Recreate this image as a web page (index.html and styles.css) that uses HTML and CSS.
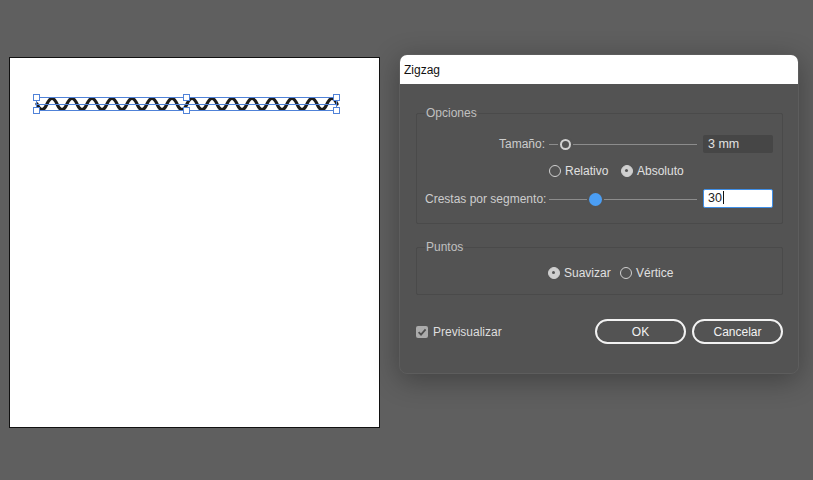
FILE: index.html
```html
<!DOCTYPE html>
<html lang="es">
<head>
<meta charset="utf-8">
<title>Zigzag</title>
<link rel="stylesheet" href="styles.css">
</head>
<body>
<div class="workspace">
  <div class="artboard">
    <svg class="art" viewBox="10 58 369 369" width="369" height="369">
      <path class="wave" d="M37,104 q5,11 10,0 t10,0 t10,0 t10,0 t10,0 t10,0 t10,0 t10,0 t10,0 t10,0 t10,0 t10,0 t10,0 t10,0 t10,0 t10,0 t10,0 t10,0 t10,0 t10,0 t10,0 t10,0 t10,0 t10,0 t10,0 t10,0 t10,0 t10,0 t10,0 t10,0"/>
      <rect class="sel" x="36.5" y="97.5" width="300" height="13"/>
      <line class="sel" x1="37" y1="104.5" x2="337" y2="104.5"/>
      <rect class="handle" x="33.5" y="94.5" width="6" height="6"/>
      <rect class="handle" x="183.5" y="94.5" width="6" height="6"/>
      <rect class="handle" x="333.5" y="94.5" width="6" height="6"/>
      <rect class="handle" x="33.5" y="107.5" width="6" height="6"/>
      <rect class="handle" x="183.5" y="107.5" width="6" height="6"/>
      <rect class="handle" x="333.5" y="107.5" width="6" height="6"/>
    </svg>
  </div>

  <div class="dialog">
    <div class="titlebar">Zigzag</div>
    <div class="body">
      <fieldset class="group">
        <legend>Opciones</legend>
        <div class="grid">
          <span class="label">Tamaño:</span>
          <div class="slider"><span class="track"></span><span class="thumb hollow"></span></div>
          <div class="input dark">3 mm</div>

          <span class="label"></span>
          <div class="radios">
            <span class="radio"><span class="dot"></span>Relativo</span>
            <span class="radio"><span class="dot on"></span>Absoluto</span>
          </div>
          <span></span>

          <span class="label">Crestas por segmento:</span>
          <div class="slider"><span class="track"></span><span class="thumb blue"></span></div>
          <div class="input light">30<span class="caret"></span></div>
        </div>
      </fieldset>

      <fieldset class="group puntos">
        <legend>Puntos</legend>
        <div class="radios pts">
          <span class="radio"><span class="dot on"></span>Suavizar</span>
          <span class="radio"><span class="dot"></span>Vértice</span>
        </div>
      </fieldset>

      <div class="footer">
        <label class="check">
          <span class="box"><svg viewBox="0 0 12 12" width="12" height="12"><path d="M2.6,6.2 L5,8.6 L9.6,3.4" fill="none" stroke="#4e4e4e" stroke-width="1.8"/></svg></span>
          Previsualizar
        </label>
        <div class="buttons">
          <button class="btn">OK</button>
          <button class="btn">Cancelar</button>
        </div>
      </div>
    </div>
  </div>
</div>
</body>
</html>
```

FILE: styles.css
```css
html, body {
  margin: 0;
  padding: 0;
  background: #5f5f5f;
  width: 813px;
  height: 480px;
  overflow: hidden;
  font-family: "Liberation Sans", Arial, sans-serif;
  font-size: 12px;
}

.workspace {
  display: flex;
  align-items: flex-start;
  padding: 54px 0 0 9px;
  gap: 19px;
}

.artboard {
  margin-top: 3px;
  width: 369px;
  height: 369px;
  background: #ffffff;
  border: 1px solid #111;
  flex: none;
}

.art { display: block; }

.wave {
  fill: none;
  stroke: #1c1c1c;
  stroke-width: 3.2;
  stroke-linecap: round;
}

.sel {
  fill: none;
  stroke: #5082d8;
  stroke-width: 1;
}

.handle {
  fill: #ffffff;
  stroke: #5082d8;
  stroke-width: 1;
}

.dialog {
  width: 398px;
  height: 318px;
  flex: none;
  background: #535353;
  border: 1px solid #5d5d5d;
  border-radius: 8px;
  box-shadow: 0 6px 28px rgba(0, 0, 0, 0.32);
  overflow: hidden;
}

.titlebar {
  height: 29px;
  background: #ffffff;
  color: #111;
  line-height: 30px;
  padding-left: 4px;
  font-size: 12px;
}

.body {
  padding: 22px 15px 0 16px;
  color: #d6d6d6;
}

.group {
  margin: 0;
  padding: 14px 8px 15px 8px;
  border: 1px solid #4a4a4a;
  border-radius: 2px;
  min-width: 0;
}

.group legend {
  padding: 0 1px;
  margin-left: 0;
  color: #c0c0c0;
  line-height: 15px;
  font-size: 12px;
}

.grid {
  display: grid;
  grid-template-columns: 124px 154px 70px;
  column-gap: 0;
  row-gap: 9px;
  align-items: center;
}

.label {
  text-align: right;
  color: #cdcdcd;
  white-space: nowrap;
  padding-right: 4px;
}

.slider {
  position: relative;
  height: 18px;
  margin-right: 6px;
}
.track {
  position: absolute;
  left: 0;
  right: 0;
  top: 9px;
  height: 1px;
  background: #8c8c8c;
}
.thumb {
  position: absolute;
  border-radius: 50%;
  box-sizing: border-box;
}
.thumb.hollow {
  left: 11px;
  top: 4px;
  width: 11px;
  height: 11px;
  border: 2px solid #d2d2d2;
  background: #535353;
  box-shadow: 0 0 0 2px #535353;
}
.thumb.blue {
  left: 40px;
  top: 3px;
  width: 13px;
  height: 13px;
  background: #4b9ef4;
  box-shadow: 0 0 0 2px #535353;
}

.input {
  height: 18px;
  box-sizing: border-box;
  line-height: 18px;
  padding-left: 5px;
  border-radius: 2px;
  font-size: 12.5px;
}
.input.dark {
  background: #464646;
  color: #e2e2e2;
}
.input.light {
  background: #ffffff;
  color: #222;
  border: 1px solid #3f8fe8;
  height: 19px;
  line-height: 17px;
  padding-left: 4px;
}
.caret {
  display: inline-block;
  width: 1px;
  height: 13px;
  background: #111;
  vertical-align: -2px;
  margin-left: 1px;
}

.radios {
  display: flex;
  height: 18px;
  align-items: center;
}
.radio {
  display: flex;
  align-items: center;
  gap: 4px;
  width: 72px;
  color: #e0e0e0;
  white-space: nowrap;
}
.dot {
  width: 12px;
  height: 12px;
  box-sizing: border-box;
  border: 1.5px solid #d0d0d0;
  border-radius: 50%;
  flex: none;
  position: relative;
}
.dot.on {
  background: #cfcfcf;
}
.dot.on::after {
  content: "";
  position: absolute;
  left: 3px;
  top: 3px;
  width: 3px;
  height: 3px;
  border-radius: 50%;
  background: #555;
}

.puntos {
  margin-top: 16px;
  padding: 9px 8px 12px 8px;
}
.pts {
  padding-left: 123px;
}

.footer {
  display: flex;
  align-items: center;
  justify-content: space-between;
  margin-top: 24px;
}
.check {
  display: flex;
  align-items: center;
  gap: 5px;
  color: #dedede;
}
.box {
  width: 12px;
  height: 12px;
  background: #ababab;
  border-radius: 2px;
  display: block;
}
.box svg { display: block; }

.buttons {
  display: flex;
  gap: 6px;
}
.btn {
  width: 91px;
  height: 25px;
  border: 2px solid #f2f2f2;
  border-radius: 13px;
  background: transparent;
  color: #f2f2f2;
  font-family: "Liberation Sans", Arial, sans-serif;
  font-size: 12px;
  padding: 0;
}
```
